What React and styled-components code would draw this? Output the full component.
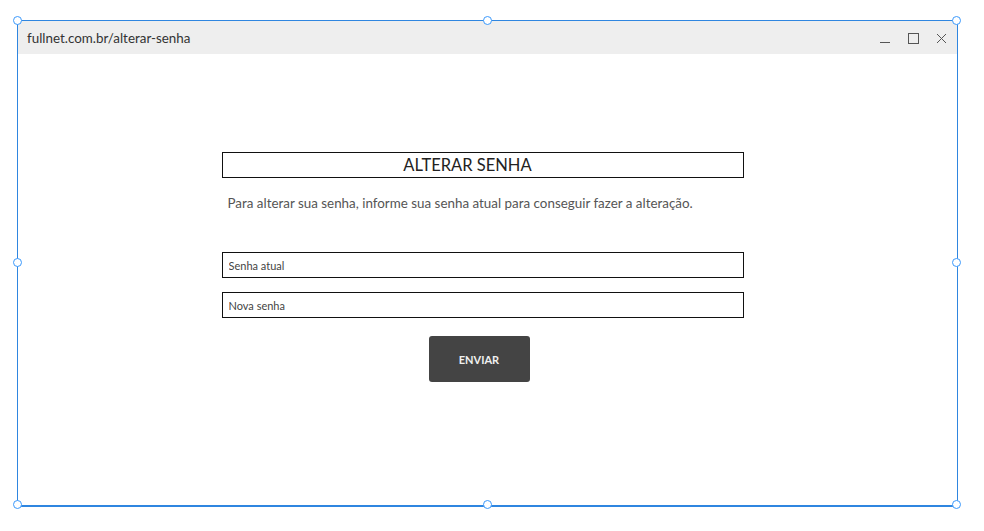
import styled, { createGlobalStyle } from 'styled-components';

const Global = createGlobalStyle`
  html, body { margin: 0; padding: 0; background: #fff; }
  body { font-family: "Lato", "Noto Sans", sans-serif; }
  * { box-sizing: border-box; }
`;

export default function App() {
  return (
    <>
      <Global />
      <Page>
        <Frame>
          <Window>
            <TitleBar>
              <Url>fullnet.com.br/alterar-senha</Url>
              <Controls>
                <svg width="12" height="12" viewBox="0 0 12 12"><path d="M1 10.5h10" stroke="#555" strokeWidth="1" /></svg>
                <svg width="12" height="12" viewBox="0 0 12 12"><rect x="1.5" y="1.5" width="10" height="10" fill="none" stroke="#555" strokeWidth="1" /></svg>
                <svg width="12" height="12" viewBox="0 0 12 12"><path d="M2 2l9 9M11 2l-9 9" stroke="#555" strokeWidth="1" /></svg>
              </Controls>
            </TitleBar>
            <Content>
              <Form>
                <Title>ALTERAR SENHA</Title>
                <Description>Para alterar sua senha, informe sua senha atual para conseguir fazer a alteração.</Description>
                <Field type="password" placeholder="Senha atual" />
                <Field type="password" placeholder="Nova senha" />
                <Actions>
                  <Button>ENVIAR</Button>
                </Actions>
              </Form>
            </Content>
          </Window>
          <Selection>
            <Handle $x="0%" $y="0%" />
            <Handle $x="50%" $y="0%" />
            <Handle $x="100%" $y="0%" />
            <Handle $x="0%" $y="50%" />
            <Handle $x="100%" $y="50%" />
            <Handle $x="0%" $y="100%" />
            <Handle $x="50%" $y="100%" />
            <Handle $x="100%" $y="100%" />
          </Selection>
        </Frame>
      </Page>
    </>
  );
}

const Page = styled.div`
  width: 984px;
  height: 531px;
  padding: 20px 0 0 17px;
`;

const Frame = styled.div`
  position: relative;
  width: 941px;
  height: 487px;
`;

const Window = styled.div`
  width: 100%;
  height: 100%;
  border: 1px solid #777;
  display: flex;
  flex-direction: column;
  background: #fff;
`;

const TitleBar = styled.div`
  height: 33px;
  background: #eeeeee;
  display: flex;
  align-items: center;
  justify-content: space-between;
  padding: 0 10px 0 9px;
`;

const Url = styled.span`
  font-size: 13.4px;
  color: #333;
`;

const Controls = styled.div`
  display: flex;
  gap: 16px;
  align-items: center;
`;

const Content = styled.div`
  flex: 1;
  display: flex;
  justify-content: center;
  padding-top: 98px;
`;

const Form = styled.div`
  width: 522px;
  margin-left: -10px;
  display: flex;
  flex-direction: column;
`;

const Title = styled.div`
  height: 26px;
  border: 1px solid #111;
  padding-right: 30px;
  text-align: center;
  font-size: 16.5px;
  line-height: 24px;
  color: #222;
`;

const Description = styled.p`
  margin: 17px 0 41px 6px;
  font-size: 13.4px;
  color: #555;
`;

const Field = styled.input`
  height: 26px;
  border: 1px solid #111;
  padding: 0 6px;
  font-family: inherit;
  font-size: 11px;
  color: #333;
  margin-bottom: 14px;
  &::placeholder { color: #444; }
  outline: none;
`;

const Actions = styled.div`
  display: flex;
  justify-content: center;
  margin-top: 4px;
`;

const Button = styled.button`
  width: 101px;
  height: 46px;
  background: #444;
  border: none;
  border-radius: 3px;
  color: #f0f0f0;
  font-family: inherit;
  font-weight: 700;
  font-size: 11px;
  margin-left: -7px;
`;

const Selection = styled.div`
  position: absolute;
  inset: 0;
  border: 1px solid #2f86e0;
  border-bottom-width: 2px;
  pointer-events: none;
`;

const Handle = styled.span`
  position: absolute;
  left: ${p => p.$x};
  top: ${p => p.$y};
  width: 9px;
  height: 9px;
  margin: -5px 0 0 -5px;
  border-radius: 50%;
  border: 1px solid #3b99fc;
  background: #fff;
`;
